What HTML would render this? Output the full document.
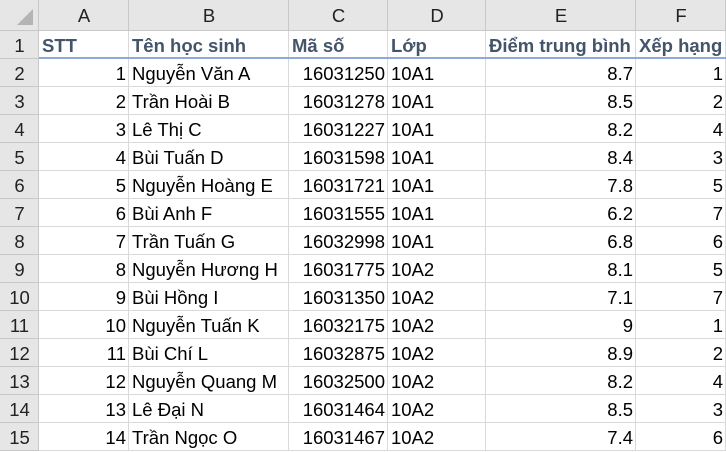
<!DOCTYPE html><html><head><meta charset="utf-8"><style>
body{margin:0;width:726px;height:452px;overflow:hidden;background:#fff;font-family:"Liberation Sans",sans-serif;font-size:18.5px;color:#000;position:relative}
.c{position:absolute;box-sizing:border-box;height:28px;line-height:29px;white-space:nowrap;overflow:hidden;padding:0 2px 0 3px}
.r{text-align:right}
.h{background:#e6e6e6;text-align:center;color:#222;border-right:1px solid #c8c8c8;border-bottom:1px solid #c8c8c8}
.g{border-right:1px solid #d9d9d9;border-bottom:1px solid #d9d9d9}
.b{font-weight:bold;color:#44546a;font-size:18.5px}
</style></head><body>
<div id="s"></div>
<script>
const cols=[[39,129],[129,289],[289,388],[388,486],[486,636],[636,726]];
const L=['A','B','C','D','E','F'];
const data=[["STT","Tên học sinh","Mã số","Lớp","Điểm trung bình","Xếp hạng"],
[1,"Nguyễn Văn A",16031250,"10A1",8.7,1],[2,"Trần Hoài B",16031278,"10A1",8.5,2],[3,"Lê Thị C",16031227,"10A1",8.2,4],[4,"Bùi Tuấn D",16031598,"10A1",8.4,3],[5,"Nguyễn Hoàng E",16031721,"10A1",7.8,5],[6,"Bùi Anh F",16031555,"10A1",6.2,7],[7,"Trần Tuấn G",16032998,"10A1",6.8,6],[8,"Nguyễn Hương H",16031775,"10A2",8.1,5],[9,"Bùi Hồng I",16031350,"10A2",7.1,7],[10,"Nguyễn Tuấn K",16032175,"10A2",9,1],[11,"Bùi Chí L",16032875,"10A2",8.9,2],[12,"Nguyễn Quang M",16032500,"10A2",8.2,4],[13,"Lê Đại N",16031464,"10A2",8.5,3],[14,"Trần Ngọc O",16031467,"10A2",7.4,6]];
let h='<div class="c h" style="left:0;top:0;width:39px;height:31px"><svg width="39" height="31" style="position:absolute;left:0;top:0"><polygon points="33,9 33,25 17,25" fill="#b4b4b4"/></svg></div>';
cols.forEach((c,i)=>h+=`<div class="c h" style="left:${c[0]}px;top:0;width:${c[1]-c[0]}px;height:31px;line-height:31px">${L[i]}</div>`);
data.forEach((row,r)=>{const t=31+r*28;
h+=`<div class="c h" style="left:0;top:${t}px;width:39px">${r+1}</div>`;
row.forEach((v,i)=>{const c=cols[i];const num=r>0&&typeof v==='number';
h+=`<div class="c g ${num?'r':''} ${r==0?'b':''}" style="left:${c[0]}px;top:${t}px;width:${c[1]-c[0]}px">${v}</div>`;});});
h+='<div style="position:absolute;left:39px;top:57px;width:687px;height:2px;background:#8ea9db"></div>';
document.getElementById('s').innerHTML=h;
</script>
</body></html>
